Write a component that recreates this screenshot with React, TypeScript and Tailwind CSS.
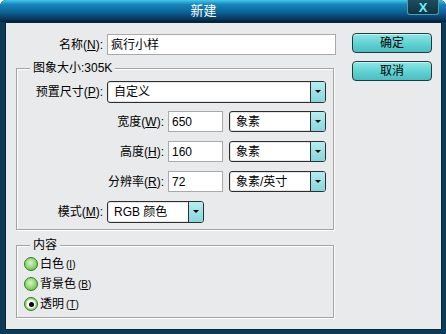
import React from "react";

const FONT = "font-['Liberation_Sans','Noto_Sans_CJK_SC',sans-serif]";

function Mn({ pre, k }: { pre: string; k: string }) {
  return (
    <span>
      {pre}(<span className="underline">{k}</span>):
    </span>
  );
}

function Select({ w, h, text }: { w: string; h: string; text: string }) {
  return (
    <div
      className={`${w} ${h} flex items-stretch bg-white border border-[#2e2e2e] rounded-[3px] overflow-hidden shadow-[inset_0_0_0_1px_#e4e4e4]`}
    >
      <div className="flex-1 flex items-center pl-[6px] text-[12px] text-black">{text}</div>
      <div className="w-[15px] bg-[linear-gradient(#b4eef0,#86d6dc)] border-l border-[#2e2e2e] flex items-center justify-center">
        <div className="w-0 h-0 border-l-[3px] border-r-[3px] border-t-[3px] border-l-transparent border-r-transparent border-t-black mt-[-1px]" />
      </div>
    </div>
  );
}

function Input({ w, value }: { w: string; value: string }) {
  return (
    <div className={`${w} h-[21px] bg-white border border-[#a9a9a9] flex items-center pl-[3px] text-[12px] text-black`}>
      {value}
    </div>
  );
}

function Button({ label }: { label: string }) {
  return (
    <div className="w-[80px] h-[20px] rounded-[4px] border border-[#1f3b3d] bg-[linear-gradient(#8ee6e6,#5ccfd0_60%,#49bfc2)] shadow-[inset_0_1px_0_#c8f6f6] flex items-center justify-center text-[12px] text-black">
      {label}
    </div>
  );
}

function Radio({ checked, label, k }: { checked?: boolean; label: string; k: string }) {
  return (
    <div className="h-[20px] flex items-center">
      {checked ? (
        <div className="w-[14px] h-[14px] rounded-full border border-[#2f7a22] bg-[radial-gradient(circle,#ffffff_45%,#9ad880_60%,#6cbc52)] flex items-center justify-center">
          <div className="w-[5px] h-[5px] rounded-full bg-black" />
        </div>
      ) : (
        <div className="w-[14px] h-[14px] rounded-full border border-[#2f7a22] bg-[radial-gradient(circle_at_45%_40%,#d6f6c6,#8cd46c_55%,#5cae44)]" />
      )}
      <span className="ml-[2px] text-[12px] text-black">
        {label}
        <span className="ml-[2px] text-[10px]">
          (<span className="underline">{k}</span>)
        </span>
      </span>
    </div>
  );
}

export default function App() {
  return (
    <div className={`${FONT} w-[446px] h-[334px] bg-[#0c3a57] rounded-t-[6px] flex flex-col overflow-hidden`}>
      {/* Title bar */}
      <div className="h-[22px] flex bg-[linear-gradient(#45c9ea,#1687bd_20%,#0d6296_55%,#07355a_88%,#031c2e)] rounded-t-[6px]">
        <div className="flex-1 text-center text-white text-[13px] leading-[22px]">新建</div>
        <div className="w-[32px] h-[15px] mr-[7px] rounded-b-[3px] border border-t-0 border-[#4b9fb0] bg-[linear-gradient(#1e4d5e,#0e3442)] flex items-center justify-center text-[#6ff0ff] text-[13px] font-bold leading-none">
          X
        </div>
      </div>

      {/* Content */}
      <div className="flex-1 ml-[5px] mr-[4px] mb-[4px] bg-[#e9eaeb] border border-[#06263a] flex items-start text-black">
        {/* Left column */}
        <div className="pl-[10px] pt-[11px] flex flex-col">
          <div className="flex items-center h-[21px]">
            <div className="w-[87px] text-right text-[12px]">
              <Mn pre="名称" k="N" />
            </div>
            <div className="ml-[4px]">
              <Input w="w-[229px]" value="疯行小样" />
            </div>
          </div>

          {/* Group 1 */}
          <div className="relative mt-[13px] w-[318px] h-[162px] border border-[#a3a3a3] shadow-[inset_1px_1px_0_#ffffff,1px_1px_0_#ffffff] flex flex-col pt-[12px]">
            <span className="absolute top-[-8px] left-[13px] px-[3px] bg-[#e9eaeb] text-[12px] leading-[14px]">
              图象大小:305K
            </span>
            <div className="flex items-center h-[22px]">
              <div className="w-[86px] text-right text-[12px]">
                <Mn pre="预置尺寸" k="P" />
              </div>
              <div className="ml-[4px]">
                <Select w="w-[219px]" h="h-[22px]" text="自定义" />
              </div>
            </div>
            {[
              { l: "宽度", k: "W", v: "650", u: "象素", mt: "mt-[8px]" },
              { l: "高度", k: "H", v: "160", u: "象素", mt: "mt-[9px]" },
              { l: "分辨率", k: "R", v: "72", u: "象素/英寸", mt: "mt-[9px]" },
            ].map((r) => (
              <div key={r.k} className={`flex items-center h-[21px] ${r.mt}`}>
                <div className="w-[147px] text-right text-[12px]">
                  <Mn pre={r.l} k={r.k} />
                </div>
                <div className="ml-[4px]">
                  <Input w="w-[55px]" value={r.v} />
                </div>
                <div className="ml-[6px]">
                  <Select w="w-[97px]" h="h-[21px]" text={r.u} />
                </div>
              </div>
            ))}
            <div className="flex items-center h-[22px] mt-[9px]">
              <div className="w-[86px] text-right text-[12px]">
                <Mn pre="模式" k="M" />
              </div>
              <div className="ml-[4px]">
                <Select w="w-[97px]" h="h-[22px]" text="RGB 颜色" />
              </div>
            </div>
          </div>

          {/* Group 2 */}
          <div className="relative mt-[15px] w-[318px] h-[73px] border border-[#a3a3a3] shadow-[inset_1px_1px_0_#ffffff,1px_1px_0_#ffffff] flex flex-col pt-[8px] pl-[7px]">
            <span className="absolute top-[-8px] left-[13px] px-[3px] bg-[#e9eaeb] text-[12px] leading-[14px]">
              内容
            </span>
            <Radio label="白色" k="I" />
            <Radio label="背景色" k="B" />
            <Radio checked label="透明" k="T" />
          </div>
        </div>

        {/* Right column */}
        <div className="ml-[16px] pt-[10px] flex flex-col gap-[8px]">
          <Button label="确定" />
          <Button label="取消" />
        </div>
      </div>
    </div>
  );
}
